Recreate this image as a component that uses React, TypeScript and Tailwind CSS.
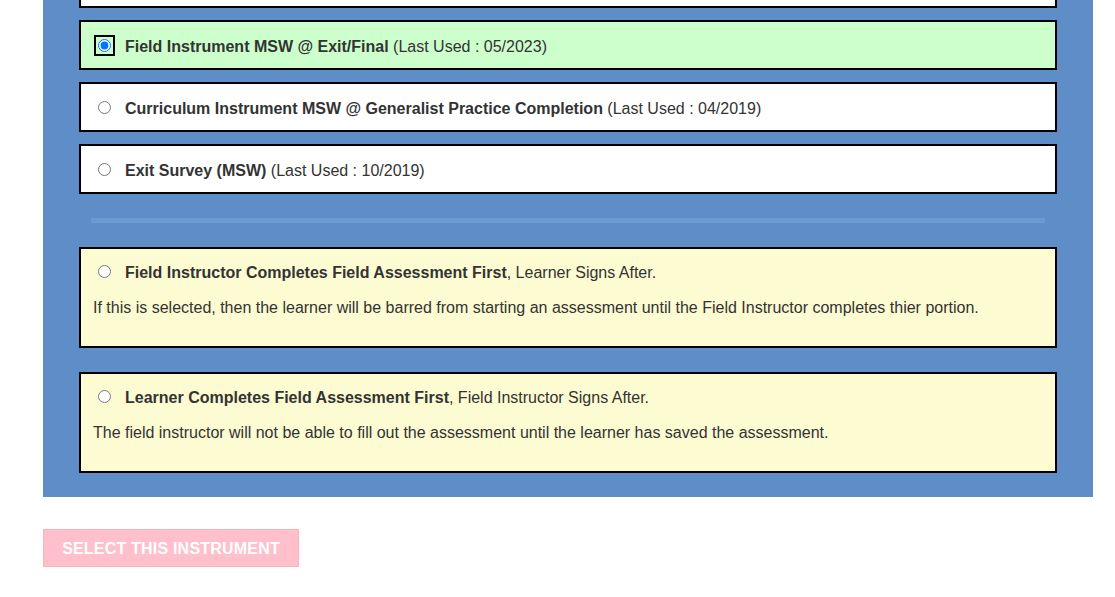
import React from "react";

type Instrument = {
  id: string;
  name: string;
  lastUsed: string;
};

const instruments: Instrument[] = [
  { id: "field-exit", name: "Field Instrument MSW @ Exit/Final", lastUsed: "05/2023" },
  {
    id: "curriculum",
    name: "Curriculum Instrument MSW @ Generalist Practice Completion",
    lastUsed: "04/2019",
  },
  { id: "exit-survey", name: "Exit Survey (MSW)", lastUsed: "10/2019" },
];

const orders = [
  {
    id: "instructor-first",
    title: "Field Instructor Completes Field Assessment First",
    rest: ", Learner Signs After.",
    note: "If this is selected, then the learner will be barred from starting an assessment until the Field Instructor completes thier portion.",
  },
  {
    id: "learner-first",
    title: "Learner Completes Field Assessment First",
    rest: ", Field Instructor Signs After.",
    note: "The field instructor will not be able to fill out the assessment until the learner has saved the assessment.",
  },
];

export default function App() {
  const selected = "field-exit";

  return (
    <div
      className="min-h-[597px] bg-white text-[16px] leading-[18px] text-[#333333]"
      style={{ fontFamily: '"Liberation Sans", Arial, sans-serif' }}
    >
      <div className="ml-[43px] w-[1050px] bg-[#5e8dc7] px-9 pb-6">
        {/* tail of the card scrolled above */}
        <div className="h-2 border-x-2 border-b-2 border-black bg-white" />

        <div className="mt-3 flex flex-col gap-3">
          {instruments.map((item) => {
            const active = item.id === selected;
            return (
              <label
                key={item.id}
                className={`flex h-[50px] items-center border-2 border-black pl-[17px] ${
                  active ? "bg-[#ccffcc]" : "bg-white"
                }`}
              >
                <input
                  type="radio"
                  name="instrument"
                  checked={active}
                  readOnly
                  className={`m-0 h-[13px] w-[13px] ${
                    active ? "outline-2 outline-offset-2 outline-black" : ""
                  }`}
                />
                <span className="ml-[14px] pt-[3px]">
                  <b>{item.name}</b> (Last Used : {item.lastUsed})
                </span>
              </label>
            );
          })}
        </div>

        <div className="mx-3 mt-6 h-[5px] bg-[#6c9bd2]" />

        <div className="mt-6 flex flex-col gap-6">
          {orders.map((o) => (
            <div
              key={o.id}
              className="h-[101px] border-2 border-black bg-[#fdfbd2] px-3 pt-[12px]"
            >
              <label className="flex items-center">
                <input type="radio" name="order" readOnly className="ml-[5px] h-[13px] w-[13px]" />
                <span className="ml-[14px] pt-[3px]">
                  <b>{o.title}</b>
                  {o.rest}
                </span>
              </label>
              <p className="mt-[17px]">{o.note}</p>
            </div>
          ))}
        </div>
      </div>

      <button
        disabled
        className="ml-[43px] mt-8 h-[38px] w-[256px] border border-[#f7b4c0] bg-[#ffc0cb] pt-[2px] text-[16px] font-bold uppercase tracking-[0.2px] text-white"
      >
        Select this instrument
      </button>
    </div>
  );
}
